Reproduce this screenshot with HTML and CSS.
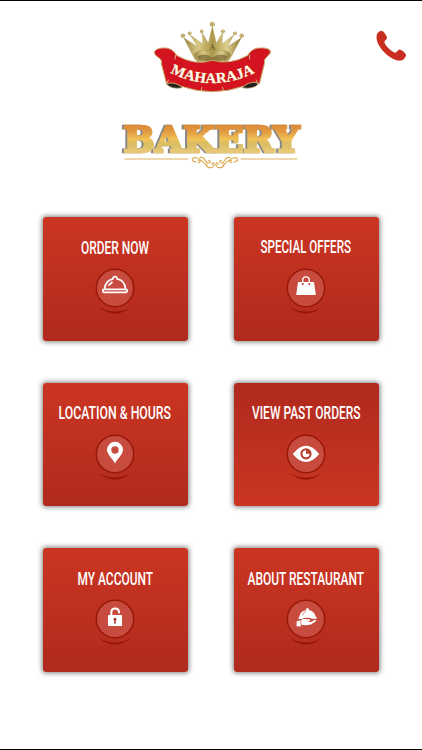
FILE: index.html
```html
<!DOCTYPE html>
<html lang="en">
<head>
  <meta charset="UTF-8" />
  <meta name="viewport" content="width=device-width, initial-scale=1.0" />
  <title>Maharaja Bakery</title>
  <link rel="stylesheet" href="styles.css">
</head>
<body>
  <header class="header">
    <svg class="logo" viewBox="0 0 405 255" role="img" aria-label="A Maharaja">
      <defs>
        <linearGradient id="gold" x1="0" x2="1" y1="0" y2="0">
          <stop offset="0" stop-color="#998341" />
          <stop offset=".25" stop-color="#d8ca85" />
          <stop offset=".5" stop-color="#ad984c" />
          <stop offset=".75" stop-color="#ddd18e" />
          <stop offset="1" stop-color="#8e7834" />
        </linearGradient>
        <path id="ribbonLine" d="M70 170 Q202 240 345 166" />
      </defs>
      <g fill="url(#gold)" stroke="#a59250" stroke-width="1">
        <path d="M150 134 L116 68 L158 95 L136 60 L174 87 L171 52 L190 85 L202 34 L214 85 L233 52 L231 87 L267 59 L247 95 L289 68 L254 134 Q202 106 150 134 Z" />
        <path d="M147 119 Q160 101 181 107 Q194 109 202 120 Q212 108 228 107 Q248 104 257 119 L247 141 H157 Z" />
        <circle cx="114" cy="62" r="6" /><circle cx="134" cy="55" r="5" />
        <circle cx="170" cy="49" r="5" /><circle cx="202" cy="28" r="7" />
        <circle cx="234" cy="49" r="5" /><circle cx="270" cy="55" r="5" />
        <circle cx="290" cy="62" r="6" />
      </g>
      <path d="M157 124 Q180 111 202 128 Q224 111 247 124 L242 135 Q202 146 162 135 Z" fill="#73602d" opacity=".65" />
      <text class="logo-initial" x="202" y="105">A</text>
      <path d="M64 207 Q78 194 104 206 L111 218 Q80 224 64 207 Z M340 207 Q326 194 300 206 L293 218 Q325 224 340 207 Z" fill="#231f20" stroke="#bda564" stroke-width="2" />
      <path d="M28 110 Q36 97 62 99 Q81 99 96 122 Q152 153 202 136 Q254 151 307 122 Q322 98 344 99 Q367 97 376 107 Q378 115 369 122 Q355 132 358 147 L343 207 Q327 193 295 214 Q202 246 109 214 Q83 198 65 207 L49 146 Q53 135 37 125 Q28 120 28 110 Z" fill="#d3131f" stroke="#c9ab68" stroke-width="3" />
      <path d="M92 119 L90 133 M313 119 L314 133 M168 229 L171 216 M236 229 L232 216 M70 194 L67 205 M334 194 L338 205" stroke="#dfc98e" stroke-width="2.5" />
      <text class="logo-name"><textPath href="#ribbonLine" textLength="264" lengthAdjust="spacingAndGlyphs" startOffset="6">MAHARAJA</textPath></text>
    </svg>

    <a class="call" href="#call" aria-label="Call">
      <svg viewBox="0 0 32 32">
        <path d="M1 3.8 C2 1.6 4.5 0 6.1 .3 C8 1 10.6 5 11.3 7.1 C11.6 9.2 8.5 10 8.7 12.1 C9.4 15.5 16.5 22.4 19.8 22.9 C22 22.7 22.4 19.6 24.4 19.7 C26.3 19.9 30.7 23.4 31 25.3 C31 27.1 29 29.8 27.1 30.7 C17 34 -2.7 15.3 1 3.8 Z" />
      </svg>
    </a>

    <svg class="bakery" viewBox="0 0 205 56" role="img" aria-label="Bakery">
      <defs>
        <linearGradient id="crust" gradientUnits="userSpaceOnUse" x1="0" x2="0" y1="10" y2="38">
          <stop offset="0" stop-color="#db8536" />
          <stop offset=".3" stop-color="#e29a40" />
          <stop offset=".58" stop-color="#f0c156" />
          <stop offset=".75" stop-color="#d9bd64" />
          <stop offset="1" stop-color="#e8c775" />
        </linearGradient>
      </defs>
      <text class="bakery-name" x="13.5" y="38.5" textLength="176" lengthAdjust="spacingAndGlyphs">BAKERY</text>
      <g fill="none" stroke="#dda94c" stroke-linecap="round">
        <path d="M15 46 H78 M131 46 H187" stroke-width=".9" />
        <g stroke-width="1.1">
          <path id="scroll" d="M86 49 C80 48 82 43.5 87 45 C91 46 93 50 97 52 M88 49.5 C91 49.5 91 46.5 88.5 47.5 M90 44.5 C96 43.5 94 49 98 50 C101 50.500 101 47 98.500 47.500 M96 52 C98 56.500 105 55 104 50.500 C103.500 49 101.500 50 102 51.500" />
          <use href="#scroll" transform="matrix(-1 0 0 1 210 0)" />
        </g>
      </g>
    </svg>
  </header>

  <main class="menu">
    <a class="tile" href="#order">
      <svg class="label" viewBox="0 0 145 24"><text x="38" y="18.5" textLength="68" lengthAdjust="spacingAndGlyphs">ORDER NOW</text></svg>
      <svg class="icon" viewBox="0 0 44 50">
        <use href="#badge" />
        <g fill="none" stroke="#fff" stroke-width="1.7" stroke-linejoin="round" stroke-linecap="round">
          <path d="M11.5 23 C12 17 16 13.5 20 12.8 C20 9.8 24 9.8 24 12.8 C29 13.5 32 17 32.5 23" />
          <rect x="9.7" y="23.3" width="24.6" height="3" rx="1.5" />
          <path d="M16 19.2 L19 16.3" stroke-width="1.8" />
        </g>
      </svg>
    </a>

    <a class="tile" href="#offers">
      <svg class="label label-raised" viewBox="0 0 145 24"><text x="26.5" y="19" textLength="90.5" lengthAdjust="spacingAndGlyphs">SPECIAL OFFERS</text></svg>
      <svg class="icon" viewBox="0 0 44 50">
        <use href="#badge" />
        <path d="M18.7 18 V14 C18.7 9.8 25.3 9.8 25.3 14 V18" fill="none" stroke="#fff" stroke-width="1.4" />
        <path d="M14 16 H30 L31.8 29 H12.2 Z" fill="#fff" />
        <circle cx="18.7" cy="18" r="1.1" fill="#b94031" /><circle cx="25.3" cy="18" r="1.1" fill="#b94031" />
      </svg>
    </a>

    <a class="tile" href="#location">
      <svg class="label" viewBox="0 0 145 24"><text x="15.5" y="19" textLength="112.5" lengthAdjust="spacingAndGlyphs">LOCATION &amp; HOURS</text></svg>
      <svg class="icon" viewBox="0 0 44 50">
        <use href="#badge" />
        <path fill="#fff" fill-rule="evenodd" d="M22 31.5 C20 27 14 22.5 14 17.8 A8 8 0 0 1 30 17.8 C30 22.5 24 27 22 31.5 Z M22 14.3 A3.7 3.7 0 1 0 22 21.7 A3.7 3.7 0 1 0 22 14.3 Z" />
      </svg>
    </a>

    <a class="tile tile-active" href="#past-orders">
      <svg class="label" viewBox="0 0 145 24"><text x="18" y="19" textLength="108.5" lengthAdjust="spacingAndGlyphs">VIEW PAST ORDERS</text></svg>
      <svg class="icon" viewBox="0 0 44 50">
        <use href="#badge" />
        <path d="M8.8 22 Q22 5.5 35.2 22 Q22 38 8.8 22 Z" fill="#fff" />
        <circle cx="22" cy="21.8" r="5.6" fill="#b94031" />
        <circle cx="22" cy="21.8" r="3.5" fill="#fff" />
        <path d="M22 21.8 V17.5 A4.3 4.3 0 0 1 26.3 21.8 Z" fill="#b94031" />
      </svg>
    </a>

    <a class="tile" href="#account">
      <svg class="label" viewBox="0 0 145 24"><text x="34.5" y="19" textLength="75.5" lengthAdjust="spacingAndGlyphs">MY ACCOUNT</text></svg>
      <svg class="icon" viewBox="0 0 44 50">
        <use href="#badge" />
        <path d="M18.3 18.5 V15.5 C18.3 10.3 26 10.3 26 15.5" fill="none" stroke="#fff" stroke-width="2" stroke-linecap="round" />
        <rect x="15" y="18" width="14" height="11" rx=".5" fill="#fff" />
        <path d="M22 20.8 A1.6 1.6 0 0 0 21.3 23.8 L21 26.5 H23 L22.7 23.8 A1.6 1.6 0 0 0 22 20.8 Z" fill="#b03a2d" />
      </svg>
    </a>

    <a class="tile" href="#about">
      <svg class="label" viewBox="0 0 145 24"><text x="13.5" y="19" textLength="116.5" lengthAdjust="spacingAndGlyphs">ABOUT RESTAURANT</text></svg>
      <svg class="icon" viewBox="0 0 44 50">
        <use href="#badge" />
        <g fill="#fff">
          <circle cx="23.5" cy="12.5" r="1.5" />
          <path d="M15.5 19.5 C16.5 11.5 29.5 10.5 31.5 19.5 L33 20.5 L32.5 21.7 H27.5 C26.5 20.3 20 20.5 18 22 H14.5 V20.5 Z" />
          <path d="M12.8 24 L16.5 23.5 C19.5 21 22 22.3 25.5 22.3 Q27.3 23.7 24.5 24.5 L22 24.8 L27 25 L31 22.8 Q33 22.8 31.5 24.5 L27 27.5 Q21.5 28.7 17 27.7 L16.8 29.5 L12.5 29.2 Z" />
        </g>
        <path d="M16.7 23.5 L17 28 M18.5 18 Q20 14.5 22 14" fill="none" stroke="#c95a4c" stroke-width=".7" />
      </svg>
    </a>
  </main>

  <!-- round button shared by every tile -->
  <svg class="shared" aria-hidden="true">
    <defs>
      <g id="badge">
        <circle cx="22" cy="22" r="18.7" fill="#c74c3f" stroke="#981808" stroke-width="1.5" />
        <path d="M6 41 Q22 54.5 38 41 Q22 50 6 41 Z" fill="#981808" />
      </g>
    </defs>
  </svg>
</body>
</html>
```
FILE: styles.css
```css
* {
  box-sizing: border-box;
}

body {
  margin: 0;
  height: 750px;
  background: #fff;
  border-top: 1px solid #000;
  border-bottom: 1px solid #000;
  font-family: Roboto, "Liberation Sans", sans-serif;
  overflow: hidden;
}

svg {
  display: block;
  overflow: visible;
}

.header {
  position: relative;
  height: 216px;
  padding: 14px 0 0;
}

.logo {
  width: 135px;
  height: 85px;
  margin-left: 145px;
}

.logo-initial {
  font: 26px "Liberation Serif", serif;
  text-anchor: middle;
  fill: #65521d;
}

.logo-name {
  font: bold 44px "Liberation Serif", serif;
  fill: #fffdf0;
  stroke: #cf9d50;
  stroke-width: 1.5px;
  paint-order: stroke;
}

.call {
  position: absolute;
  top: 29px;
  right: 15px;
}

.call svg {
  width: 31px;
  height: 32px;
  fill: #c82f20;
}

.bakery {
  width: 205px;
  height: 56px;
  margin: 13px 0 0 110px;
}

.bakery-name {
  font: bold 35px "DejaVu Serif", serif;
  fill: url(#crust);
  stroke: url(#crust);
  stroke-width: 2.6px;
  filter: drop-shadow(-1.2px .8px .5px #888);
}

.menu {
  display: grid;
  grid-template-columns: 145px 145px;
  gap: 42px 46px;
  margin-left: 42.5px;
}

.tile {
  height: 123.5px;
  padding-top: 17.5px;
  border-radius: 3px;
  background: linear-gradient(#cb3522, #b02a1e);
  box-shadow: 0 0 5px 1px rgba(0, 0, 0, 0.5);
}

.tile-active {
  background: linear-gradient(#b02a1e, #cb3522);
}

.label {
  width: 145px;
  height: 24px;
  font-size: 18.5px;
  font-weight: 500;
  fill: #fff;
}

.label-raised {
  transform: translateY(-1.5px);
}

.icon {
  width: 44px;
  height: 50px;
  margin: 7.5px auto 0;
}

.shared {
  width: 0;
  height: 0;
}
```
